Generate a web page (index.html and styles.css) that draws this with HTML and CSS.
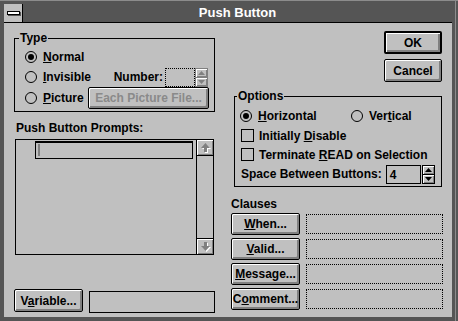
FILE: index.html
```html
<!DOCTYPE html>
<html lang="en">
  <head>
    <meta charset="UTF-8" />
    <title>Push Button</title>
    <link rel="stylesheet" href="styles.css">
  </head>
  <body>
    <div class="window">
      <div class="titlebar">
        <div class="sysmenu"><span class="sysbar"></span></div>
        <div class="title">Push Button</div>
      </div>

      <div class="dialog">
        <!-- left column -->
        <div class="col-left">
          <fieldset class="group type-group">
            <legend>Type</legend>
            <div class="group-body">
              <div class="row">
                <span class="radio on"></span>
                <span class="lbl"><u>N</u>ormal</span>
              </div>
              <div class="row">
                <span class="radio"></span>
                <span class="lbl"><u>I</u>nvisible</span>
                <span class="number">
                  <span class="lbl">Number:</span>
                  <span class="field dotted num-field"></span>
                  <span class="spin disabled">
                    <span class="spin-half">
                      <svg width="7" height="4" viewBox="0 0 7 4"><polygon points="0,4 3.5,0 7,4" /></svg>
                    </span>
                    <span class="spin-half">
                      <svg width="7" height="4" viewBox="0 0 7 4"><polygon points="0,0 7,0 3.5,4" /></svg>
                    </span>
                  </span>
                </span>
              </div>
              <div class="row row-tall">
                <span class="radio"></span>
                <span class="lbl"><u>P</u>icture</span>
                <button class="btn pic-btn" disabled>Each Picture File...</button>
              </div>
            </div>
          </fieldset>

          <div class="caption">Push Button Prompts:</div>
          <div class="list">
            <div class="list-body">
              <div class="edit"><span class="caret"></span></div>
            </div>
            <div class="scrollbar">
              <span class="sb-btn up">
                <svg width="9" height="9" viewBox="0 0 9 9"><polygon class="arrow-shadow" points="5.5,1 10,6 7,6 7,10 4,10 4,6 1,6" /><polygon points="4.5,0 9,5 6,5 6,9 3,9 3,5 0,5" /></svg>
              </span>
              <span class="sb-btn down">
                <svg width="9" height="9" viewBox="0 0 9 9"><polygon class="arrow-shadow" points="4,1 7,1 7,5 10,5 5.5,10 1,5 4,5" /><polygon points="3,0 6,0 6,4 9,4 4.5,9 0,4 3,4" /></svg>
              </span>
            </div>
          </div>

          <div class="var-row">
            <button class="btn var-btn">V<u>a</u>riable...</button>
            <span class="field solid var-field"></span>
          </div>
        </div>

        <!-- right column -->
        <div class="col-right">
          <button class="btn default ok-btn">OK</button>
          <button class="btn cancel-btn">Cancel</button>

          <fieldset class="group options-group">
            <legend>Options</legend>
            <div class="group-body">
              <div class="row">
                <span class="opt-h">
                  <span class="radio on"></span>
                  <span class="lbl"><u>H</u>orizontal</span>
                </span>
                <span class="radio"></span>
                <span class="lbl">Ver<u>t</u>ical</span>
              </div>
              <div class="row row-short">
                <span class="check"></span>
                <span class="lbl">Initially <u>D</u>isable</span>
              </div>
              <div class="row row-short">
                <span class="check"></span>
                <span class="lbl">Terminate <u>R</u>EAD on Selection</span>
              </div>
              <div class="row space-row">
                <span class="space-lbl">Space Between Buttons:</span>
                <span class="field solid space-field">4</span>
                <span class="spin">
                  <span class="spin-half">
                    <svg width="7" height="4" viewBox="0 0 7 4"><polygon points="0,4 3.5,0 7,4" /></svg>
                  </span>
                  <span class="spin-half">
                    <svg width="7" height="4" viewBox="0 0 7 4"><polygon points="0,0 7,0 3.5,4" /></svg>
                  </span>
                </span>
              </div>
            </div>
          </fieldset>

          <div class="clauses-lbl">Clauses</div>
          <div class="clauses">
            <div class="clause">
              <button class="btn clause-btn"><u>W</u>hen...</button>
              <span class="field dotted clause-field"></span>
            </div>
            <div class="clause">
              <button class="btn clause-btn"><u>V</u>alid...</button>
              <span class="field dotted clause-field"></span>
            </div>
            <div class="clause">
              <button class="btn clause-btn"><u>M</u>essage...</button>
              <span class="field dotted clause-field"></span>
            </div>
            <div class="clause">
              <button class="btn clause-btn">C<u>o</u>mment...</button>
              <span class="field dotted clause-field"></span>
            </div>
          </div>
        </div>
      </div>
    </div>
  </body>
</html>
```

FILE: styles.css
```css
body {
  margin: 0;
  font: bold 12px/14px "Liberation Sans", Arial, sans-serif;
  color: #000;
  background: #555;
}
.window {
  width: 458px;
  height: 321px;
  box-sizing: border-box;
  padding: 4px 6px 4px 4px;
  background: #555;
  box-shadow: inset 0 1px #8c8c8c, inset -2px 0 #555, inset -3px 0 #8c8c8c;
}
.titlebar {
  display: flex;
  height: 18px;
  border-bottom: 1px solid #000;
}
.sysmenu {
  width: 18px;
  background: #c0c0c0;
  border-right: 1px solid #000;
  display: flex;
  align-items: center;
  justify-content: center;
}
.sysbar {
  width: 13px;
  height: 4px;
  box-sizing: border-box;
  background: #fff;
  border: 1px solid #000;
  box-shadow: 1px 1px #555;
}
.title {
  flex: 1;
  color: #fff;
  font-size: 13px;
  line-height: 18px;
  text-align: center;
}
.dialog {
  display: flex;
  gap: 16px;
  height: 294px;
  padding: 0 9px 0 10px;
  background: #c0c0c0;
}
u {
  text-decoration-thickness: 1px;
  text-underline-offset: 1px;
}
.lbl {
  white-space: nowrap;
}

/* columns */
.col-left {
  width: 201px;
  display: flex;
  flex-direction: column;
  padding: 8px 0 4px;
  box-sizing: border-box;
}
.col-right {
  width: 212px;
  display: flex;
  flex-direction: column;
  padding-top: 8px;
}

/* group boxes */
.group {
  margin: 0;
  padding: 0;
  min-width: 0;
  border: 1px solid #000;
}
.group legend {
  padding: 0 1px;
  line-height: 14px;
}
.type-group legend {
  margin-left: 4px;
}
.options-group {
  margin: 7px 1px 0 3px;
}
.options-group legend {
  margin-left: 2px;
}
.type-group .group-body {
  padding: 2px 6px 2px 10px;
}
.options-group .group-body {
  padding: 3px 4px 2px 5px;
}
.row {
  display: flex;
  align-items: center;
  height: 20px;
}
.row-tall {
  height: 22px;
}
.row-short {
  height: 19px;
}
.radio {
  width: 12px;
  height: 12px;
  box-sizing: border-box;
  border: 1px solid #000;
  border-radius: 50%;
  display: flex;
  align-items: center;
  justify-content: center;
  flex: none;
  margin-right: 6px;
}
.radio.on::after {
  content: "";
  width: 6px;
  height: 6px;
  border-radius: 50%;
  background: #000;
}
.check {
  width: 13px;
  height: 13px;
  box-sizing: border-box;
  border: 1px solid #000;
  flex: none;
  margin: 0 5px 0 1px;
}
.opt-h {
  display: flex;
  align-items: center;
  width: 111px;
}
.number {
  display: flex;
  align-items: center;
  margin-left: auto;
}
.number .lbl {
  margin-right: 2px;
}

/* fields */
.field {
  display: block;
  box-sizing: border-box;
  flex: none;
}
.dotted {
  border: 1px dotted #000;
}
.solid {
  border: 1px solid #000;
}
.num-field {
  width: 30px;
  height: 19px;
}
.space-lbl {
  white-space: nowrap;
  flex: none;
  margin: 0 4px 0 1px;
}
.space-field {
  width: 35px;
  height: 19px;
  padding: 2px 3px;
  line-height: 14px;
}
.spin {
  display: flex;
  flex-direction: column;
  width: 13px;
  height: 19px;
  box-sizing: border-box;
  border: 1px solid #000;
  margin-left: 1px;
  flex: none;
}
.number .spin {
  margin-left: 0;
}
.spin-half {
  flex: 1;
  display: flex;
  align-items: center;
  justify-content: center;
  box-shadow: inset 1px 1px #fff, inset -1px -1px #808080;
}
.spin-half + .spin-half {
  border-top: 1px solid #000;
}
.spin svg {
  display: block;
}
.spin.disabled {
  border-color: #808080;
}
.spin.disabled .spin-half + .spin-half {
  border-top-color: #808080;
}
.spin.disabled polygon {
  fill: #808080;
}

/* buttons */
.btn {
  font: inherit;
  color: #000;
  background: #c0c0c0;
  border: 1px solid #000;
  border-radius: 2px;
  box-shadow: inset 1px 1px #fff, inset -2px -2px #808080;
  padding: 0;
  margin: 0;
  white-space: nowrap;
}
.btn.default {
  border-width: 2px;
}
.btn:disabled {
  color: #8a8a8a;
}
.pic-btn {
  width: 121px;
  height: 22px;
  margin-left: auto;
  margin-right: -1px;
}
.ok-btn,
.cancel-btn {
  align-self: flex-end;
  width: 58px;
  height: 23px;
  margin-right: 1px;
}
.cancel-btn {
  margin-top: 5px;
}

/* prompts list */
.caption {
  margin: 9px 0 0 2px;
}
.list {
  display: flex;
  height: 116px;
  box-sizing: border-box;
  margin: 4px 1px 0;
  border: 1px solid #000;
}
.list-body {
  flex: 1;
  padding: 1px 0 0 19px;
}
.edit {
  width: 158px;
  height: 18px;
  box-sizing: border-box;
  border: 1px solid #000;
  border-top-width: 2px;
  padding: 1px 2px;
}
.caret {
  display: block;
  width: 2px;
  height: 12px;
  background: #808080;
}
.scrollbar {
  width: 16px;
  border-left: 1px solid #000;
  display: flex;
  flex-direction: column;
  justify-content: space-between;
}
.sb-btn {
  height: 15px;
  display: flex;
  align-items: center;
  justify-content: center;
  box-shadow: inset 1px 1px #fff, inset -1px -1px #808080;
}
.sb-btn.up {
  border-bottom: 1px solid #000;
}
.sb-btn.down {
  border-top: 1px solid #000;
}
.sb-btn svg {
  display: block;
  overflow: visible;
}
.sb-btn polygon {
  fill: #808080;
}
.sb-btn .arrow-shadow {
  fill: #fff;
}

.var-row {
  display: flex;
  align-items: flex-end;
  margin-top: auto;
}
.var-btn {
  width: 69px;
  height: 23px;
  margin-bottom: 1px;
}
.var-field {
  width: 126px;
  height: 22px;
  margin-left: 6px;
}

/* clauses */
.clauses-lbl {
  margin-top: 10px;
}
.clauses {
  display: flex;
  flex-direction: column;
  gap: 3px;
  margin-top: 2px;
}
.clause {
  display: flex;
  align-items: center;
  gap: 6px;
}
.clause-btn {
  width: 71px;
  height: 22px;
}
.clause-field {
  width: 137px;
  height: 20px;
}
```
